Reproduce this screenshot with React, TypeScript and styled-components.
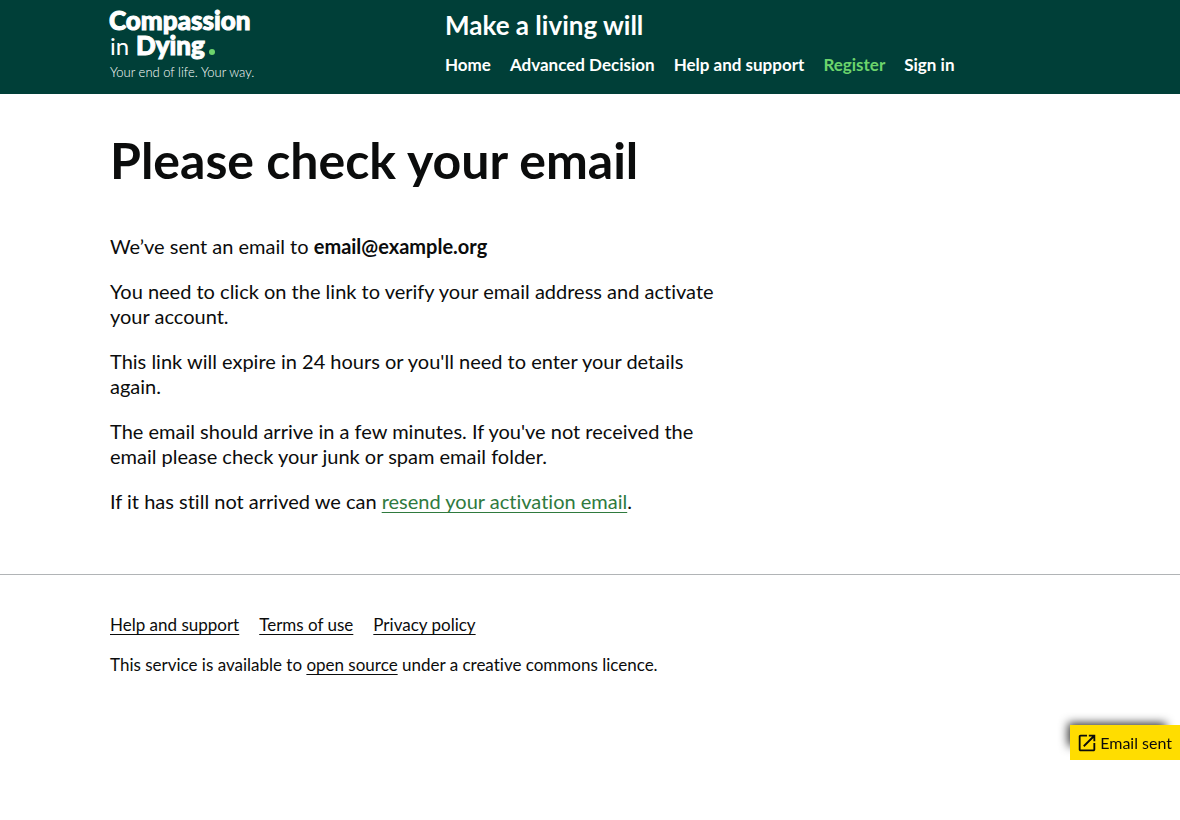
import React from "react";
import styled, { createGlobalStyle } from "styled-components";

const GlobalStyle = createGlobalStyle`
  *, *::before, *::after { box-sizing: border-box; }
  body {
    margin: 0;
    background: #fff;
    color: #0b0c0c;
    font-family: Lato, "Liberation Sans", sans-serif;
    font-size: 20px;
    font-variant-ligatures: none;
    line-height: 25px;
  }
`;

const Container = styled.div`
  max-width: 990px;
  margin: 0 auto;
  padding: 0 15px;
`;

const Header = styled.header`
  background: #003f38;
  color: #fff;
`;

const HeaderRow = styled(Container)`
  display: flex;
  padding-top: 10px;
  padding-bottom: 14px;
`;

const LogoLink = styled.a`
  flex: 0 0 335px;
  height: 70px;
`;

const LogoDrawing = styled.svg`
  display: block;
  width: 145px;
  height: 70px;
  overflow: visible;
  fill: #fff;
  font-family: Lato, "Liberation Sans", sans-serif;
`;

const ServiceName = styled.a`
  display: block;
  margin-bottom: 10px;
  color: #fff;
  font-size: 26px;
  font-weight: 700;
  line-height: 30px;
  text-decoration: none;
`;

const NavList = styled.ul`
  display: flex;
  flex-wrap: wrap;
  gap: 0 19px;
  margin: 0;
  padding: 0;
  list-style: none;
`;

const NavLink = styled.a<{ $current?: boolean }>`
  color: ${(p) => (p.$current ? "#6cd46c" : "#fff")};
  font-size: 17px;
  font-weight: 700;
  line-height: 30px;
  text-decoration: none;
`;

const Main = styled.main`
  padding: 40px 0 60px;
`;

const Title = styled.h1`
  margin: 0 0 48px;
  font-size: 50px;
  font-weight: 700;
  line-height: 52px;
`;

const Copy = styled.div`
  max-width: 620px;
`;

const Paragraph = styled.p`
  margin: 0 0 20px;

  &:last-child {
    margin-bottom: 0;
  }
`;

const Strong = styled.strong`
  font-weight: 700;
`;

const TextLink = styled.a<{ $tone?: string }>`
  color: ${(p) => p.$tone ?? "inherit"};
  text-decoration: underline;
  text-decoration-thickness: 1px;
  text-decoration-skip-ink: none;
  text-underline-offset: 3px;
`;

const Footer = styled.footer`
  padding: 40px 0;
  border-top: 1px solid #b1b4b6;
  font-size: 17px;
  line-height: 20px;
`;

const FooterLinks = styled(NavList)`
  gap: 0 20px;
  margin-bottom: 20px;
`;

const Notice = styled.a`
  position: fixed;
  right: 0;
  bottom: 60px;
  display: flex;
  align-items: center;
  gap: 2px;
  height: 35px;
  padding: 0 8px 0 6px;
  background: #ffdd00;
  box-shadow: -8px -8px 10px -6px rgba(0, 0, 0, 0.8);
  color: #0b0c0c;
  font-size: 16px;
  line-height: 20px;
  text-decoration: none;
`;

const navigation = [
  { label: "Home" },
  { label: "Advanced Decision" },
  { label: "Help and support" },
  { label: "Register", current: true },
  { label: "Sign in" },
];

const footerLinks = ["Help and support", "Terms of use", "Privacy policy"];

function Logo() {
  return (
    <LogoDrawing viewBox="0 0 145 70" role="img" aria-label="Compassion in Dying">
      <text x="-1" y="20" fontSize="26" fontWeight="900" stroke="#fff" strokeWidth="1">Compassion</text>
      <text x="0" y="45" fontSize="24">in</text>
      <text x="26" y="45" fontSize="26" fontWeight="900" stroke="#fff" strokeWidth="1">Dying</text>
      <circle cx="102" cy="42" r="3" fill="#6cd46c" />
      <text x="0" y="67" fontSize="13" fontWeight="300">Your end of life. Your way.</text>
    </LogoDrawing>
  );
}

function OpenIcon() {
  return (
    <svg width="22" height="22" viewBox="0 0 24 24" fill="#0b0c0c" aria-hidden="true">
      <path d="M19 19H5V5h7V3H5c-1.1 0-2 .9-2 2v14c0 1.1.9 2 2 2h14c1.1 0 2-.9 2-2v-7h-2v7zM14 3v2h3.59l-9.83 9.83 1.41 1.41L19 6.41V10h2V3h-7z" />
    </svg>
  );
}

export default function App() {
  return (
    <>
      <GlobalStyle />
      <Header>
        <HeaderRow>
          <LogoLink href="#"><Logo /></LogoLink>
          <div>
            <ServiceName href="#">Make a living will</ServiceName>
            <nav aria-label="Main">
              <NavList>
                {navigation.map((item) => (
                  <li key={item.label}>
                    <NavLink href="#" $current={item.current}>{item.label}</NavLink>
                  </li>
                ))}
              </NavList>
            </nav>
          </div>
        </HeaderRow>
      </Header>
      <Main>
        <Container>
          <Title>Please check your email</Title>
          <Copy>
            <Paragraph>We’ve sent an email to <Strong>email@example.org</Strong></Paragraph>
            <Paragraph>You need to click on the link to verify your email address and activate your account.</Paragraph>
            <Paragraph>This link will expire in 24 hours or you'll need to enter your details again.</Paragraph>
            <Paragraph>The email should arrive in a few minutes. If you've not received the email please check your junk or spam email folder.</Paragraph>
            <Paragraph>If it has still not arrived we can <TextLink href="#" $tone="#2f7a3e">resend your activation email</TextLink>.</Paragraph>
          </Copy>
        </Container>
      </Main>
      <Footer>
        <Container>
          <FooterLinks>
            {footerLinks.map((label) => (
              <li key={label}><TextLink href="#">{label}</TextLink></li>
            ))}
          </FooterLinks>
          <Paragraph>This service is available to <TextLink href="#">open source</TextLink> under a creative commons licence.</Paragraph>
        </Container>
      </Footer>
      <Notice href="#"><OpenIcon />Email sent</Notice>
    </>
  );
}
